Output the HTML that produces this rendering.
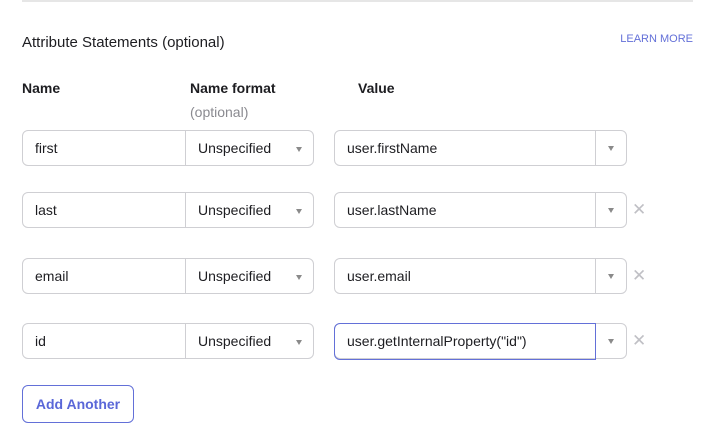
<!DOCTYPE html><html><head><style>
body{margin:0;width:711px;height:437px;background:#fff;font-family:"Liberation Sans",sans-serif;position:relative;overflow:hidden;color:#1d1d21}
.a{position:absolute}
.hr{left:22px;top:0;width:671px;height:2px;background:#e6e6e6}
.t{left:22px;top:34px;font-size:15px}
.lm{right:18px;top:33px;font-size:11px;color:#6370d8}
.h{font-size:14px;font-weight:bold;top:80px}
.box{border:1px solid #cfcfd3;border-radius:6px;height:36px;box-sizing:border-box;font-size:14px;line-height:34px}
.arr{position:absolute;width:0;height:0;border-left:3.5px solid transparent;border-right:3.5px solid transparent;border-top:5px solid #8a8a8a}
.x{font-size:17px;color:#c0c0c5;left:632px}
.btn{left:22px;top:385px;width:112px;height:38px;border:1px solid #6370d8;border-radius:6px;box-sizing:border-box;color:#5a67d8;font-weight:bold;font-size:14px;line-height:36px;text-align:center}
</style></head><body>
<div class="a hr"></div>
<div class="a t">Attribute Statements (optional)</div>
<div class="a lm">LEARN MORE</div>
<div class="a h" style="left:22px">Name</div>
<div class="a h" style="left:190px">Name format</div>
<div class="a h" style="left:358px">Value</div>
<div class="a" style="left:190px;top:104px;font-size:14px;color:#8a8a90">(optional)</div>
<div id="rows"></div>
<script>
var rows=[["first","user.firstName",130,0,0],["last","user.lastName",192,1,0],["email","user.email",258,1,0],["id",'user.getInternalProperty("id")',323,1,1]];
var h="";
rows.forEach(function(r){var y=r[2];
h+='<div class="a box" style="left:22px;top:'+y+'px;width:292px"><span style="position:absolute;left:12px">'+r[0]+'</span><div style="position:absolute;left:162px;top:0;bottom:0;width:1px;background:#cfcfd3"></div><span style="position:absolute;left:175px">Unspecified</span><div class="arr" style="left:273px;top:16px"></div></div>';
h+='<div class="a box" style="left:334px;top:'+y+'px;width:293px"><span style="position:absolute;left:12px">'+r[1]+'</span><div style="position:absolute;left:260px;top:0;bottom:0;width:1px;background:#cfcfd3"></div><div class="arr" style="left:273px;top:15px"></div></div>';
if(r[4])h+='<div class="a" style="left:334px;top:'+y+'px;width:262px;height:37px;border:1px solid #6370d8;border-radius:6px 0 0 6px;box-sizing:border-box"></div>';
if(r[3])h+='<div class="a x" style="top:'+(y+8)+'px">&#x2715;</div>';
});
document.getElementById("rows").innerHTML=h;
</script>
<div class="a btn">Add Another</div>
</body></html>
